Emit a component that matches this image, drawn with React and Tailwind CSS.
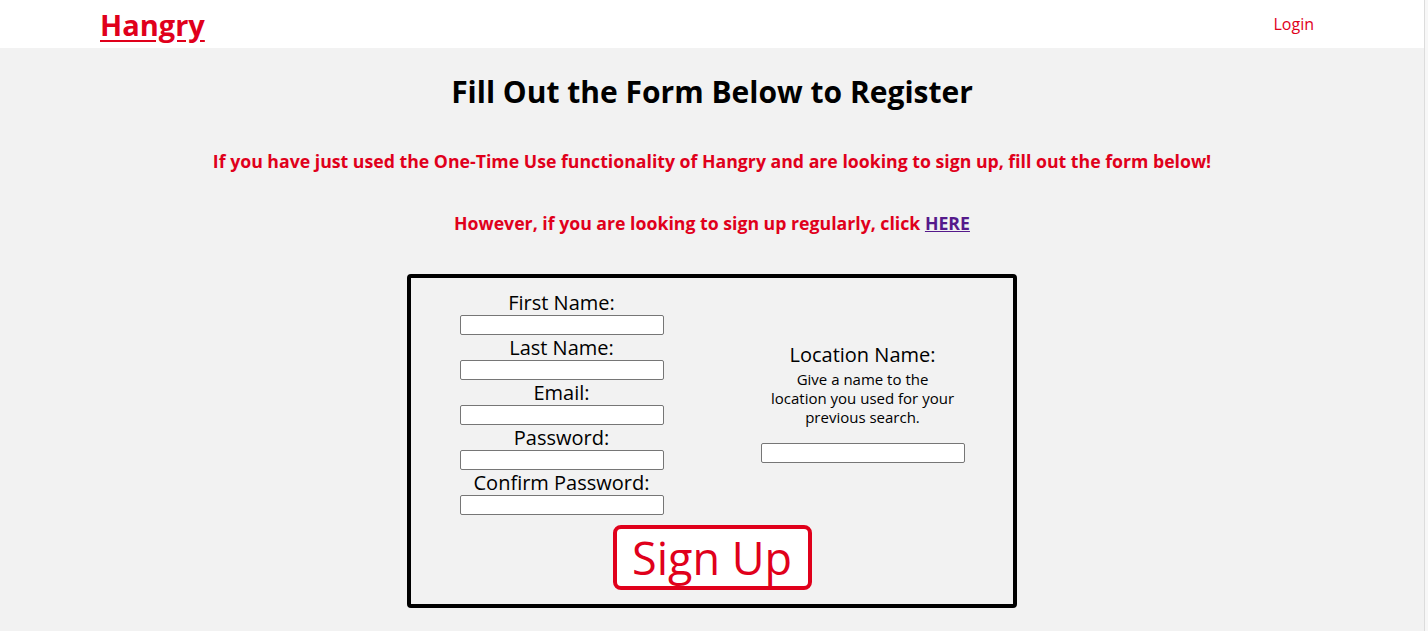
import React from 'react';

export default function App() {
  const fields = ['First Name:', 'Last Name:', 'Email:', 'Password:', 'Confirm Password:'];

  return (
    <div className="flex h-[631px] w-[1428px] bg-[#f7f7f7]" style={{ fontFamily: '"Open Sans", "DejaVu Sans", sans-serif' }}>
      <div className="flex w-[1425px] flex-col border-r border-[#dcdcdc] bg-[#f2f2f2]">
        {/* Header */}
        <header className="flex h-[48px] items-center justify-between bg-white pl-[100px] pr-[110px]">
          <a href="#" className="text-[29px] font-bold leading-none text-[#e0001b] underline underline-offset-4">
            Hangry
          </a>
          <a href="#" className="text-[16px] text-[#e0001b]">Login</a>
        </header>

        {/* Main */}
        <main className="flex flex-col items-center">
          <h1 className="mt-[22px] text-[30px] font-bold leading-[44px] text-black">
            Fill Out the Form Below to Register
          </h1>
          <p className="mt-[35px] text-[17.7px] font-bold leading-[24px] text-[#e0001b]">
            If you have just used the One-Time Use functionality of Hangry and are looking to sign up, fill out the form below!
          </p>
          <p className="mt-[38px] text-[17.7px] font-bold leading-[24px] text-[#e0001b]">
            However, if you are looking to sign up regularly, click{' '}
            <a href="#" className="text-[#551a8b] underline">HERE</a>
          </p>

          {/* Form box */}
          <div className="mt-[39px] flex w-[610px] flex-col rounded-[4px] border-4 border-black pb-[14px] pt-[12px]">
            <div className="grid grid-cols-2 items-center">
              <div className="flex flex-col items-center">
                {fields.map((f) => (
                  <div key={f} className="flex flex-col items-center">
                    <label className="text-[20px] leading-[25px] text-black">{f}</label>
                    <input type="text" className="h-[20px] w-[204px] rounded-[2px] border border-[#767676] bg-white" />
                  </div>
                ))}
              </div>
              <div className="flex flex-col items-center">
                <label className="text-[20px] leading-[25px] text-black">Location Name:</label>
                <p className="mt-[3px] whitespace-nowrap text-center text-[15px] leading-[19px] text-black">
                  Give a name to the
                  <br />
                  location you used for your
                  <br />
                  previous search.
                </p>
                <input type="text" className="mt-[16px] h-[20px] w-[204px] rounded-[2px] border border-[#767676] bg-white" />
              </div>
            </div>
            <div className="mt-[10px] flex justify-center">
              <button className="h-[65px] w-[199px] rounded-[8px] border-4 border-[#e0001b] bg-white text-[45px] leading-none text-[#e0001b]">
                Sign Up
              </button>
            </div>
          </div>
        </main>
      </div>
    </div>
  );
}
